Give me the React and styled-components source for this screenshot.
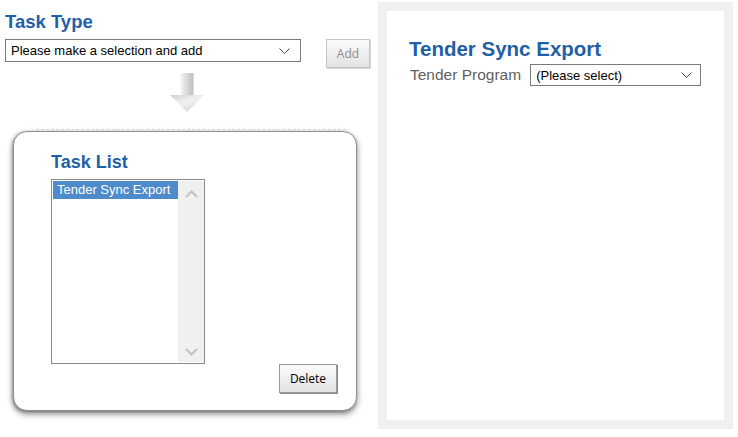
import React from 'react'
import styled, { createGlobalStyle } from 'styled-components'

const GlobalStyle = createGlobalStyle`
  html, body { margin: 0; padding: 0; background: #fff; }
  body { font-family: "Liberation Sans", Arial, sans-serif; }
`;

const Page = styled.div`
  display: flex;
  width: 738px;
  height: 437px;
  overflow: hidden;
`;

const LeftColumn = styled.div`
  width: 373px;
  flex: none;
  padding: 11px 0 0 5px;
  display: flex;
  flex-direction: column;
`;

const Heading = styled.h2`
  margin: 0;
  font-family: "Liberation Sans", Arial, sans-serif;
  font-weight: 700;
  font-size: ${p => p.size || 18}px;
  line-height: 22px;
  color: #1f5fa6;
`;

const TypeRow = styled.div`
  display: flex;
  align-items: flex-start;
  gap: 25px;
  margin-top: 6px;
  width: 364px;
`;

const SelectBox = styled.div`
  position: relative;
  width: ${p => p.width}px;
  height: ${p => p.height}px;
  box-sizing: border-box;
  border: 1px solid #7a7a7a;
  background: #fff;
  display: flex;
  align-items: center;
  padding-left: 5px;
  font-size: 13px;
  color: #000;
  flex: none;
`;

const Chevron = styled.svg`
  position: absolute;
  right: ${p => p.right || 8}px;
  top: 50%;
  margin-top: -3px;
`;

const GrayButton = styled.button`
  flex: none;
  width: ${p => p.width}px;
  height: 29px;
  box-sizing: border-box;
  padding: 0;
  border: 1px solid ${p => (p.disabled ? '#c4c4c4' : '#9a9a9a')};
  border-radius: 0;
  background: linear-gradient(#fbfbfb, #e3e3e3);
  font-family: "Open Sans", "Noto Sans", sans-serif;
  font-size: 12px;
  color: ${p => (p.disabled ? '#8c8c8c' : '#000')};
  box-shadow: 1px 1px 0 ${p => (p.disabled ? '#d8d8d8' : '#8a8a8a')};
`;

const ArrowWrap = styled.div`
  width: 364px;
  display: flex;
  justify-content: center;
  margin-top: 5px;
  height: 39px;
`;

const Card = styled.div`
  position: relative;
  margin: 19px 0 0 8px;
  width: 344px;
  height: 280px;
  box-sizing: border-box;
  border: 1px solid #8e8e8e;
  border-radius: 14px;
  background: #fff;
  box-shadow: 0 3px 6px rgba(0, 0, 0, 0.45), -1px 1px 3px rgba(0, 0, 0, 0.25);
  padding: 19px 19px 17px 37px;
  display: flex;
  flex-direction: column;

  &::before {
    content: '';
    position: absolute;
    left: 22px;
    right: 10px;
    top: -3px;
    border-top: 1px dashed #d6d6d6;
  }
`;

const ListBox = styled.div`
  margin-top: 6px;
  width: 154px;
  height: 185px;
  box-sizing: border-box;
  border: 1px solid #8a8a8a;
  display: flex;
  padding: 1px 0 1px 1px;
`;

const Options = styled.div`
  flex: 1;
`;

const Option = styled.div`
  height: 18px;
  line-height: 18px;
  padding-left: 4px;
  font-size: 13px;
  color: ${p => (p.selected ? '#fff' : '#000')};
  background: ${p => (p.selected ? '#4d8bca' : 'transparent')};
  white-space: nowrap;
`;

const ScrollBar = styled.div`
  width: 26px;
  background: #f0f0f0;
  display: flex;
  flex-direction: column;
  justify-content: space-between;
  align-items: center;
  padding: 9px 0 6px;
`;

const ButtonRow = styled.div`
  display: flex;
  justify-content: flex-end;
`;

const RightPanel = styled.div`
  margin: 2px 0 0 0;
  width: 355px;
  height: 427px;
  box-sizing: border-box;
  padding: 9px;
  background: #eff1f0;
  flex: none;
`;

const PanelBody = styled.div`
  height: 100%;
  background: #fff;
  padding: 27px 0 0 22px;
  box-sizing: border-box;
`;

const FieldRow = styled.div`
  display: flex;
  align-items: center;
  gap: 9px;
  margin-top: 4px;
  padding-left: 1px;
`;

const Label = styled.span`
  font-size: 15.5px;
  color: #5f5f5f;
`;

const SelectArrow = ({ right }) => (
  <Chevron right={right} width="11" height="6" viewBox="0 0 11 6">
    <path d="M0.5 0.5 L5.5 5.5 L10.5 0.5" fill="none" stroke="#444" strokeWidth="1" />
  </Chevron>
);

const ScrollChevron = ({ up }) => (
  <svg width="13" height="8" viewBox="0 0 13 8">
    <path
      d={up ? 'M1 7 L6.5 1.5 L12 7' : 'M1 1 L6.5 6.5 L12 1'}
      fill="none"
      stroke="#c2c2c2"
      strokeWidth="2.2"
    />
  </svg>
);

const DownArrow = () => (
  <svg width="36" height="39" viewBox="0 0 36 39">
    <defs>
      <linearGradient id="shaft" x1="0" y1="0" x2="1" y2="0">
        <stop offset="0" stopColor="#f4f4f4" />
        <stop offset="1" stopColor="#bdbdbd" />
      </linearGradient>
      <linearGradient id="head" x1="0" y1="0" x2="0.6" y2="1">
        <stop offset="0" stopColor="#cfcfcf" />
        <stop offset="0.5" stopColor="#f2f2f2" />
        <stop offset="1" stopColor="#d6d6d6" />
      </linearGradient>
    </defs>
    <rect x="11.5" y="0" width="13" height="23" fill="url(#shaft)" />
    <path d="M1 22 L35 22 L18 39 Z" fill="url(#head)" />
  </svg>
);

export default function App() {
  return (
    <Page>
      <GlobalStyle />
      <LeftColumn>
        <Heading size={18.5}>Task Type</Heading>
        <TypeRow>
          <SelectBox width={296} height={23}>
            Please make a selection and add
            <SelectArrow right={10} />
          </SelectBox>
          <GrayButton width={44} disabled>Add</GrayButton>
        </TypeRow>
        <ArrowWrap>
          <DownArrow />
        </ArrowWrap>
        <Card>
          <Heading>Task List</Heading>
          <ListBox>
            <Options>
              <Option selected>Tender Sync Export</Option>
            </Options>
            <ScrollBar>
              <ScrollChevron up />
              <ScrollChevron />
            </ScrollBar>
          </ListBox>
          <ButtonRow>
            <GrayButton width={58}>Delete</GrayButton>
          </ButtonRow>
        </Card>
      </LeftColumn>
      <RightPanel>
        <PanelBody>
          <Heading size={20.5}>Tender Sync Export</Heading>
          <FieldRow>
            <Label>Tender Program</Label>
            <SelectBox width={171} height={22}>
              (Please select)
              <SelectArrow right={8} />
            </SelectBox>
          </FieldRow>
        </PanelBody>
      </RightPanel>
    </Page>
  )
}
